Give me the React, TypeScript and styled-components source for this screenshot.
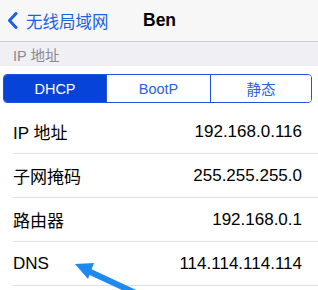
import React from 'react';
import styled, { createGlobalStyle } from 'styled-components';

const GlobalStyle = createGlobalStyle`
  body {
    margin: 0;
    background: #ffffff;
    font-family: "Liberation Sans", "Noto Sans CJK SC", sans-serif;
  }
`;

const Screen = styled.div`
  position: relative;
  width: 318px;
  height: 290px;
  overflow: hidden;
  background: #ffffff;
`;

// Навігаційна панель
const NavBar = styled.div`
  height: 41px;
  display: flex;
  align-items: center;
  background: #f7f7f7;
  border-bottom: 1px solid #cfcfd2;
  position: relative;
`;

const BackButton = styled.div`
  display: flex;
  align-items: center;
  gap: 8px;
  padding-left: 7px;
  color: #1c5fe3;
  font-size: 16.5px;
`;

const Title = styled.div`
  position: absolute;
  left: 143px;
  top: 0;
  height: 41px;
  display: flex;
  align-items: center;
  font-size: 17.5px;
  font-weight: bold;
  color: #000;
`;

const SectionHeader = styled.div`
  height: 24px;
  display: flex;
  align-items: center;
  padding-left: 13px;
  background: #efeff4;
  color: #8a8a8f;
  font-size: 14.5px;
`;

const Segmented = styled.div`
  margin: 8px 6px 0 3px;
  height: 27px;
  display: grid;
  grid-template-columns: 102px 104px 1fr;
  border: 1px solid #1d55e0;
  border-radius: 4px;
  overflow: hidden;
`;

const Segment = styled.div<{ $active?: boolean }>`
  display: flex;
  align-items: center;
  justify-content: center;
  font-size: 14.5px;
  background: ${(p) => (p.$active ? '#0644d9' : '#ffffff')};
  color: ${(p) => (p.$active ? '#ffffff' : '#2a62e0')};
  border-left: ${(p) => (p.$active ? 'none' : '1px solid #1d55e0')};
`;

const List = styled.div`
  margin-top: 7px;
  padding-left: 13px;
`;

const Row = styled.div`
  height: 43px;
  display: flex;
  align-items: center;
  justify-content: space-between;
  padding-right: 16px;
  border-bottom: 1px solid #e0e0e3;
  font-size: 17px;
  color: #000;
`;

const Arrow = styled.svg`
  position: absolute;
  left: 0;
  top: 0;
`;

const rows = [
  { label: 'IP 地址', value: '192.168.0.116' },
  { label: '子网掩码', value: '255.255.255.0' },
  { label: '路由器', value: '192.168.0.1' },
  { label: 'DNS', value: '114.114.114.114' },
];

export default function App() {
  return (
    <Screen>
      <GlobalStyle />
      <NavBar>
        <BackButton>
          <svg width="11" height="17" viewBox="0 0 11 17">
            <polyline points="9,1.5 2.5,8.5 9,15.5" fill="none" stroke="#1c5fe3" strokeWidth="3" strokeLinecap="round" strokeLinejoin="round" />
          </svg>
          <span>无线局域网</span>
        </BackButton>
        <Title>Ben</Title>
      </NavBar>
      <SectionHeader>IP 地址</SectionHeader>
      <Segmented>
        <Segment $active>DHCP</Segment>
        <Segment>BootP</Segment>
        <Segment>静态</Segment>
      </Segmented>
      <List>
        {rows.map((r) => (
          <Row key={r.label}>
            <span>{r.label}</span>
            <span>{r.value}</span>
          </Row>
        ))}
      </List>
      <Arrow width="318" height="290" viewBox="0 0 318 290">
        <line x1="142" y1="296" x2="86" y2="270" stroke="#1e8af0" strokeWidth="6" />
        <polygon points="75,264 94,263 88,279" fill="#1e8af0" />
      </Arrow>
    </Screen>
  );
}
